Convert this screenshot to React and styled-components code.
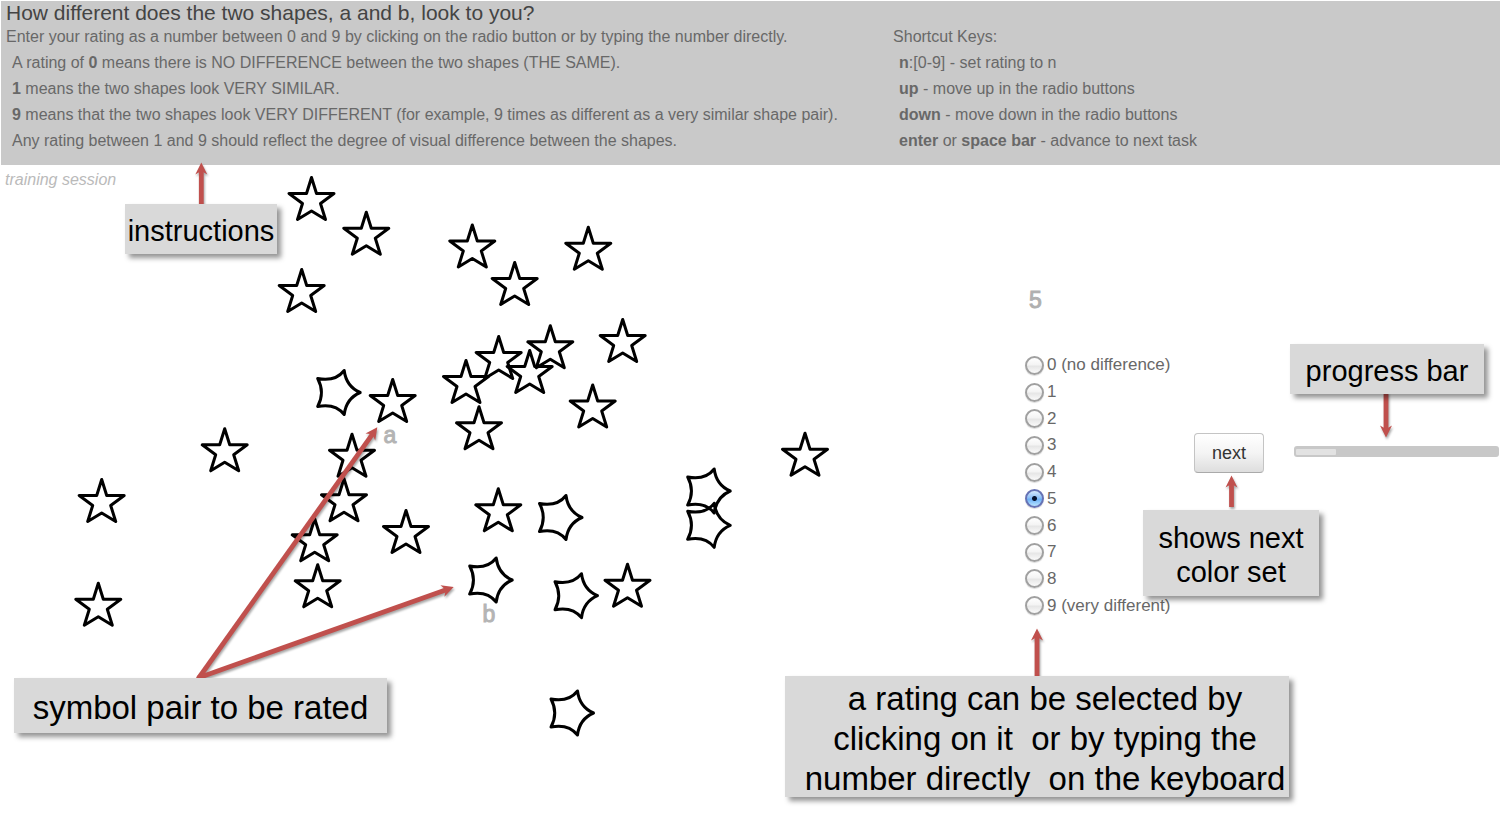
import React, { useEffect, useState } from "react";
import styled, { createGlobalStyle } from "styled-components";

const GlobalStyle = createGlobalStyle`
  * { box-sizing: border-box; }
  body {
    margin: 0;
    background: #fff;
    color: #686868;
    font-family: "Liberation Sans", Arial, Helvetica, sans-serif;
    font-size: 16px;
  }
`;

const Page = styled.div`
  min-height: 100vh;
  padding: 1px 1px 0;
`;

const Header = styled.header`
  position: relative;
  padding: 0 0 11px 5px;
  background: #c9c9c9;
`;

const Title = styled.h1`
  margin: 0;
  color: #444;
  font-size: 21px;
  font-weight: 400;
  line-height: 23px;
`;

const HelpColumns = styled.div`
  display: grid;
  grid-template-columns: 19fr 13fr;
`;

const HelpText = styled.p`
  margin: 0;
  padding-left: ${(p) => (p.$indent ? "6px" : "0")};
  line-height: 26px;
  white-space: nowrap;
`;

const Main = styled.main`
  display: grid;
  grid-template-columns: minmax(0, 1fr) 475px;
`;

const Stage = styled.section`
  position: relative;
  display: grid;
`;

const SessionLabel = styled.em`
  grid-area: 1 / 1;
  padding: 6px 4px;
  color: #bababa;
  line-height: 18px;
`;

const Shapes = styled.svg`
  grid-area: 1 / 1;
  display: block;
`;

const Mark = styled.text`
  fill: #b4b4b4;
  stroke: #b4b4b4;
  font-size: 23px;
  text-anchor: middle;
`;

const Panel = styled.section`
  position: relative;
  display: flex;
  align-items: flex-start;
`;

const RatingColumn = styled.div`
  width: 169px;
  padding-top: 122px;
`;

const CurrentRating = styled.output`
  display: block;
  margin-bottom: 39px;
  padding-left: 4px;
  color: #b0b0b0;
  font-size: 23px;
  line-height: 26px;
  -webkit-text-stroke: 1px #b0b0b0;
`;

const RatingGroup = styled.fieldset`
  display: grid;
  grid-auto-rows: 1fr;
  height: 267px;
  margin: 0;
  padding: 0;
  border: 0;
`;

const RatingOption = styled.label`
  display: flex;
  align-items: center;
  gap: 3px;
  font-size: 17px;
  white-space: nowrap;
`;

const Radio = styled.input`
  appearance: none;
  flex: none;
  width: 19px;
  height: 19px;
  margin: 0;
  border: 2px solid #a0a0a0;
  border-radius: 50%;
  background: linear-gradient(#fff, #f4f4f4 45%, #e6e6e6 55%, #fafafa);
  box-shadow: 0 1px 1px rgba(0, 0, 0, 0.15);

  &:checked {
    border-color: #6672b4;
    background:
      radial-gradient(circle, #06122e 0 2px, transparent 3px),
      linear-gradient(#d6e9fc, #8fc0f6 45%, #6cb0f6 55%, #b8e4ff);
  }
`;

const NextButton = styled.button`
  width: 70px;
  height: 40px;
  margin-top: 268px;
  padding: 0;
  border: 1px solid #c4c4c4;
  border-bottom-color: #aaa;
  border-radius: 4px;
  background: linear-gradient(#fff, #f4f4f4 50%, #dedede);
  color: #333;
  font-family: inherit;
  font-size: 18px;
`;

const ProgressTrack = styled.div`
  flex: 1;
  height: 11px;
  margin: 281px 1px 0 30px;
  padding: 3px 2px 2px;
  border-radius: 3px;
  background: #c8c8c8;
`;

const ProgressFill = styled.div`
  height: 6px;
  border-radius: 1px;
  background: #e2e2e2;
`;

const Callout = styled.aside`
  position: absolute;
  left: ${(p) => p.$x}px;
  top: ${(p) => p.$y}px;
  display: flex;
  align-items: center;
  justify-content: center;
  width: ${(p) => p.$w}px;
  height: ${(p) => p.$h}px;
  padding-top: 4px;
  padding-left: ${(p) => p.$inset || 0}px;
  background: #d9d9d9;
  box-shadow: 4px 4px 5px rgba(0, 0, 0, 0.42);
  color: #000;
  font-size: ${(p) => (p.$large ? "33px" : "29px")};
  line-height: ${(p) => (p.$large ? "40px" : "34px")};
  text-align: center;
  white-space: pre;
`;

const ArrowLayer = styled.svg`
  position: absolute;
  left: 0;
  top: 0;
  overflow: visible;
  pointer-events: none;
  filter: drop-shadow(1px 2px 1px rgba(0, 0, 0, 0.35));
`;

const STARS = [
  [311.5, 200], [366.3, 234.7], [472.3, 247.5], [588.3, 249.7], [514.7, 285],
  [301.7, 292], [622.7, 342], [550.3, 348.3], [498.7, 359], [529.7, 373],
  [466, 383], [592.7, 407.5], [479, 429.3], [392.7, 402], [224.7, 451.3],
  [352, 456.7], [344, 501.3], [314.7, 541.3], [317.7, 587.3], [406, 533],
  [101.7, 502], [98.3, 605.7], [498.3, 511.3], [627.5, 586.7], [805, 455.7],
];

const CURVED_STARS = [
  [338.2, 392.5], [560, 517.5], [708.2, 491], [708.2, 525.3],
  [490.2, 580], [575.5, 595.7], [571.5, 713],
];

const STAR_PATH =
  "M0-22.500L5-6.500H22.500L9 3.500L14 19.500L0 11L-14 19.500L-9 3.500L-22.500-6.500H-5Z";
const CURVED_PATH =
  "M22 0Q8 -6 6 -22Q-3 -10.500 -20.500 -14Q-13 0 -20.500 14Q-3 10.500 6 22Q8 6 22 0Z";

function Arrow({ from, to }) {
  const dx = to[0] - from[0];
  const dy = to[1] - from[1];
  const length = Math.hypot(dx, dy);
  const angle = (Math.atan2(dy, dx) * 180) / Math.PI;
  return (
    <g transform={`translate(${from[0]} ${from[1]}) rotate(${angle})`} fill="#c0504d">
      <path d={`M0-2.400H${length - 8}V2.400H0Z`} />
      <path d={`M${length} 0L${length - 12}-6L${length - 8.5} 0L${length - 12} 6Z`} />
    </g>
  );
}

const RATINGS = [
  "0 (no difference)", "1", "2", "3", "4", "5", "6", "7", "8", "9 (very different)",
];

export default function App() {
  const [rating, setRating] = useState(5);
  const progress = 20;

  useEffect(() => {
    const onKey = (event) => {
      if (/^[0-9]$/.test(event.key)) setRating(Number(event.key));
    };
    window.addEventListener("keydown", onKey);
    return () => window.removeEventListener("keydown", onKey);
  }, []);

  return (
    <Page>
      <GlobalStyle />
      <Header>
        <Title>How different does the two shapes, a and b, look to you?</Title>
        <HelpColumns>
          <div>
            <HelpText>
              Enter your rating as a number between 0 and 9 by clicking on the radio button or by typing the number directly.
            </HelpText>
            <HelpText $indent>
              A rating of <b>0</b> means there is NO DIFFERENCE between the two shapes (THE SAME).
            </HelpText>
            <HelpText $indent><b>1</b> means the two shapes look VERY SIMILAR.</HelpText>
            <HelpText $indent>
              <b>9</b> means that the two shapes look VERY DIFFERENT (for example, 9 times as different as a very similar shape pair).
            </HelpText>
            <HelpText $indent>
              Any rating between 1 and 9 should reflect the degree of visual difference between the shapes.
            </HelpText>
          </div>
          <div>
            <HelpText>Shortcut Keys:</HelpText>
            <HelpText $indent><b>n</b>:[0-9] - set rating to n</HelpText>
            <HelpText $indent><b>up</b> - move up in the radio buttons</HelpText>
            <HelpText $indent><b>down</b> - move down in the radio buttons</HelpText>
            <HelpText $indent><b>enter</b> or <b>space bar</b> - advance to next task</HelpText>
          </div>
        </HelpColumns>
      </Header>

      <Main>
        <Stage>
          <SessionLabel>training session</SessionLabel>
          <Shapes width="860" height="600" viewBox="1 165 860 600">
            <g fill="none" stroke="#000" strokeWidth="3" strokeLinejoin="round">
              {STARS.map(([x, y]) => (
                <path key={`${x}-${y}`} d={STAR_PATH} transform={`translate(${x} ${y})`} />
              ))}
              {CURVED_STARS.map(([x, y]) => (
                <path key={`${x}-${y}`} d={CURVED_PATH} transform={`translate(${x} ${y})`} />
              ))}
            </g>
            <Mark x="390" y="443">a</Mark>
            <Mark x="489" y="622">b</Mark>
          </Shapes>
          <ArrowLayer width="860" height="600" viewBox="1 165 860 600">
            <Arrow from={[201.3, 206]} to={[201.3, 162.5]} />
            <Arrow from={[198, 679]} to={[377.3, 427.3]} />
            <Arrow from={[198, 678]} to={[453.7, 587]} />
          </ArrowLayer>
          <Callout $x={124} $y={39} $w={152} $h={50}>instructions</Callout>
          <Callout $x={13} $y={513} $w={373} $h={55} $large>symbol pair to be rated</Callout>
        </Stage>

        <Panel>
          <RatingColumn>
            <CurrentRating>{rating}</CurrentRating>
            <RatingGroup aria-label="Difference rating">
              {RATINGS.map((label, value) => (
                <RatingOption key={label}>
                  <Radio
                    type="radio"
                    name="rating"
                    value={value}
                    checked={rating === value}
                    onChange={() => setRating(value)}
                  />
                  {label}
                </RatingOption>
              ))}
            </RatingGroup>
          </RatingColumn>
          <NextButton type="button">next</NextButton>
          <ProgressTrack
            role="progressbar"
            aria-label="Session progress"
            aria-valuenow={progress}
          >
            <ProgressFill style={{ width: `${progress}%` }} />
          </ProgressTrack>

          <ArrowLayer width="475" height="600" viewBox="1025 165 475 600">
            <Arrow from={[1386, 392]} to={[1386, 437.5]} />
            <Arrow from={[1231.5, 507]} to={[1231.5, 475.5]} />
            <Arrow from={[1037, 678]} to={[1037, 628.5]} />
          </ArrowLayer>
          <Callout $x={265} $y={179} $w={194} $h={50}>progress bar</Callout>
          <Callout $x={118} $y={345} $w={176} $h={86}>{"shows next\ncolor set"}</Callout>
          <Callout $x={-240} $y={511} $w={504} $h={121} $inset={16} $large>
            {"a rating can be selected by\nclicking on it  or by typing the\nnumber directly  on the keyboard"}
          </Callout>
        </Panel>
      </Main>
    </Page>
  );
}
